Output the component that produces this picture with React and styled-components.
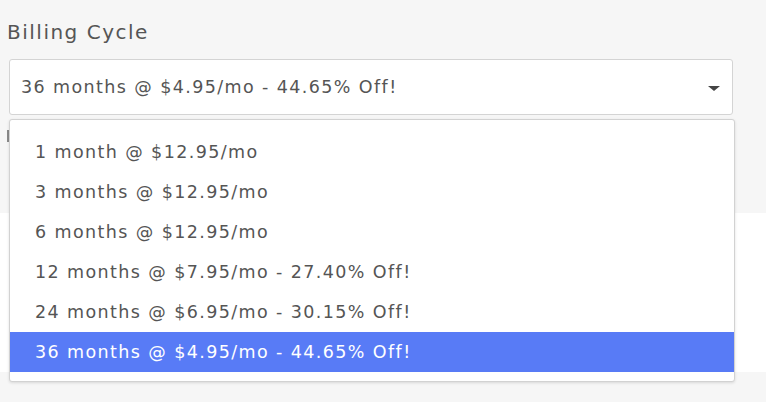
import React from 'react'
import styled, { createGlobalStyle } from 'styled-components'

const GlobalStyle = createGlobalStyle`
  body {
    margin: 0;
    background: #ffffff;
    font-family: 'DejaVu Sans', 'Liberation Sans', sans-serif;
  }
`

const Page = styled.div`
  width: 766px;
  display: flex;
  flex-direction: column;
`

const FormSection = styled.div`
  background: #f6f6f6;
  height: 213px;
  padding: 20px 0 0 7px;
  box-sizing: border-box;
`

const WhiteSection = styled.div`
  background: #ffffff;
  height: 159px;
`

const FooterStrip = styled.div`
  background: #f6f6f6;
  height: 30px;
`

const Label = styled.div`
  font-size: 20px;
  line-height: 24px;
  letter-spacing: 1.5px;
  color: #555555;
  margin-bottom: 15px;
`

const HiddenLabelEdge = styled.div`
  width: 2px;
  height: 12px;
  background: #8a8a8a;
`

const SelectWrap = styled.div`
  position: relative;
  margin-left: 2px;
  width: 724px;
  margin-bottom: 15px;
`

const SelectBox = styled.div`
  height: 56px;
  box-sizing: border-box;
  border: 1px solid #d4d4d4;
  border-radius: 3px;
  background: #ffffff;
  display: flex;
  align-items: center;
  justify-content: space-between;
  padding: 0 12px 0 11px;
  font-size: 17.5px;
  letter-spacing: 1.4px;
  color: #555555;
`

const Caret = styled.span`
  width: 0;
  height: 0;
  border-left: 6px solid transparent;
  border-right: 6px solid transparent;
  border-top: 5px solid #444444;
  margin-top: 2px;
`

const Menu = styled.ul`
  position: absolute;
  top: 60px;
  left: 0;
  width: 726px;
  box-sizing: border-box;
  margin: 0;
  padding: 12px 0 9px;
  list-style: none;
  background: #ffffff;
  border: 1px solid #d2d2d2;
  border-radius: 3px;
  box-shadow: 0 1px 3px rgba(0, 0, 0, 0.12);
  z-index: 2;
`

const Option = styled.li`
  height: 40px;
  display: flex;
  align-items: center;
  padding-left: 25px;
  font-size: 17.5px;
  letter-spacing: 1.4px;
  color: ${(p) => (p.$active ? '#ffffff' : '#555555')};
  background: ${(p) => (p.$active ? '#587bf6' : 'transparent')};
`

const options = [
  '1 month @ $12.95/mo',
  '3 months @ $12.95/mo',
  '6 months @ $12.95/mo',
  '12 months @ $7.95/mo - 27.40% Off!',
  '24 months @ $6.95/mo - 30.15% Off!',
  '36 months @ $4.95/mo - 44.65% Off!'
]

const App = () => {
  const selected = 5
  return (
    <Page>
      <GlobalStyle />
      <FormSection>
        <Label>Billing Cycle</Label>
        <SelectWrap>
          <SelectBox>
            <span>{options[selected]}</span>
            <Caret />
          </SelectBox>
          <Menu>
            {options.map((o, i) => (
              <Option key={o} $active={i === selected}>
                {o}
              </Option>
            ))}
          </Menu>
        </SelectWrap>
        <HiddenLabelEdge />
      </FormSection>
      <WhiteSection />
      <FooterStrip />
    </Page>
  )
}

export default App
